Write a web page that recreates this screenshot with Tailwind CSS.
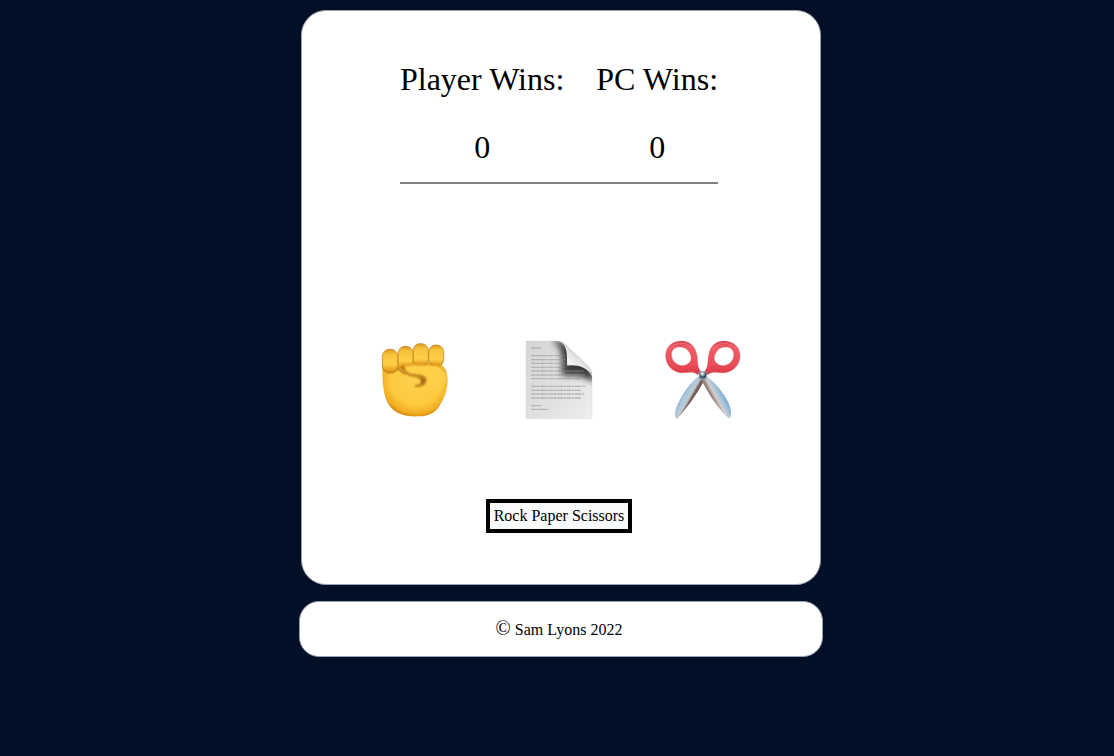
<!DOCTYPE html>
<html lang="en">
<head>
<meta charset="utf-8">
<meta name="viewport" content="width=device-width, initial-scale=1">
<title>Rock Paper Scissors</title>
<script src="https://cdn.jsdelivr.net/npm/@tailwindcss/browser@4"></script>
</head>
<body class="min-h-screen bg-[#020f26] pt-[10px] pl-2 text-black font-['Liberation_Serif','Times_New_Roman',serif]">
<main class="mx-auto flex w-full max-w-[520px] flex-col items-center rounded-[25px] border border-gray-400 bg-white pt-[50px] pr-1 pb-[51px]">
  <section class="grid grid-cols-[auto_auto] gap-x-8 gap-y-8 border-b-2 border-[#808080] pb-[17px] text-center text-[32px] leading-9" aria-label="Score">
    <h2>Player Wins:</h2>
    <h2>PC Wins:</h2>
    <output>0</output>
    <output>0</output>
  </section>
  <div class="mt-[146px] flex gap-12">
    <button type="button" aria-label="Rock" class="h-[100px] w-24">
      <svg viewBox="0 0 288 300" class="size-full" aria-hidden="true">
        <defs>
          <radialGradient id="skin" gradientUnits="userSpaceOnUse" cx="148" cy="145" r="122"><stop offset="0" stop-color="#ffd250"/><stop offset=".65" stop-color="#fdc93f"/><stop offset=".86" stop-color="#f2ae22"/><stop offset="1" stop-color="#c87a0a"/></radialGradient>
          <linearGradient id="finger" x2="0" y2="1"><stop stop-color="#dc9a1c"/><stop offset=".22" stop-color="#f8c33a"/><stop offset=".65" stop-color="#ffcf46"/><stop offset="1" stop-color="#df8f12"/></linearGradient>
          <filter id="soft" x="-20%" y="-20%" width="140%" height="140%"><feGaussianBlur stdDeviation="2.5"/></filter>
        </defs>
        <path d="M46 100C46 82 65 91 98 92L210 98C231 103 243 125 242 153C240 184 231 206 221 222C209 246 187 259 155 259C119 261 91 253 73 234C51 211 45 170 46 100Z" fill="url(#skin)"/>
        <path d="M51 116Q71 139 93 113Q104 127 118 131" fill="none" stroke="#a86300" stroke-width="5" filter="url(#soft)"/>
        <g fill="url(#finger)" stroke="#b8770f" stroke-width="2">
          <rect x="185" y="45" width="45" height="65" rx="21"/>
          <rect x="138" y="41" width="46" height="68" rx="21"/>
          <rect x="93" y="49" width="45" height="68" rx="21"/>
          <rect x="46" y="58" width="46" height="69" rx="21"/>
        </g>
        <path d="M133 103C158 101 182 105 205 105C227 105 239 128 234 153C228 175 202 186 178 176C170 171 177 160 175 151C169 138 132 145 114 129C104 116 115 103 133 103Z" fill="#ffcf47" filter="url(#soft)"/>
        <path d="M117 104Q160 102 205 104Q227 108 236 127" fill="none" stroke="#bb760d" stroke-width="3" filter="url(#soft)"/>
        <path d="M108 107C106 119 117 131 131 135C151 138 173 136 175 150C174 163 164 168 146 168" fill="none" stroke="#ad690a" stroke-width="6" stroke-linecap="round" filter="url(#soft)"/>
        <path d="M146 140C162 142 174 146 173 153Q170 162 157 166C167 156 164 147 146 140Z" fill="#713b00" opacity=".75" filter="url(#soft)"/>
      </svg>
    </button>
    <button type="button" aria-label="Paper" class="h-[100px] w-24">
      <svg viewBox="0 0 288 300" class="size-full" aria-hidden="true">
        <defs>
          <linearGradient id="sheet" x2="1" y2="1"><stop stop-color="#d5d5d5"/><stop offset=".55" stop-color="#e0e0e0"/><stop offset="1" stop-color="#eeeeee"/></linearGradient>
          <linearGradient id="curl" gradientUnits="userSpaceOnUse" x1="170" y1="112" x2="205" y2="76"><stop stop-color="#b8b8b8"/><stop offset=".25" stop-color="#f7f7f7"/><stop offset=".65" stop-color="#e6e6e6"/><stop offset="1" stop-color="#d5d5d5"/></linearGradient>
          <clipPath id="page"><path d="M45 33H136C151 33 160 40 169 49L232 110C239 117 243 125 243 139V266H45Z"/></clipPath>
          <filter id="shade" x="-30%" y="-30%" width="160%" height="160%"><feGaussianBlur stdDeviation="9"/></filter>
        </defs>
        <path d="M45 33H136C151 33 160 40 169 49L232 110C239 117 243 125 243 139V266H45Z" fill="url(#sheet)" stroke="#d0d0d0" stroke-width="1"/>
        <g clip-path="url(#page)">
          <path d="M120 23L178 44L246 116L251 160Q222 128 156 137Q168 64 120 23" fill="#222" opacity=".85" filter="url(#shade)"/>
          <path d="M166 60L160 123Q190 116 243 138" fill="none" stroke="#333" stroke-width="16" opacity=".6" filter="url(#shade)"/>
        </g>
        <path d="M61 54H92M61 77H163M61 89H163M61 100H163M61 112H164M61 123H218M61 135H222M61 146H209M61 169H223M61 181H209M61 192H218M61 204H211M61 227H92M61 238H112" fill="none" stroke="#8c8c8c" stroke-width="4" stroke-dasharray="13 2 8 2 18 2 6 2" opacity=".55"/>
        <path d="M136 33C159 33 168 55 168 83V107C190 102 230 108 243 139C243 124 238 115 229 106L167 46C159 38 151 33 136 33Z" fill="url(#curl)"/>
      </svg>
    </button>
    <button type="button" aria-label="Scissors" class="h-[100px] w-24">
      <svg viewBox="0 0 288 300" class="size-full" aria-hidden="true">
        <defs>
          <linearGradient id="bladeLeft" gradientUnits="userSpaceOnUse" x1="84" y1="185" x2="112" y2="201"><stop stop-color="#8fb6d3"/><stop offset=".55" stop-color="#b1cde0"/><stop offset=".78" stop-color="#c5c3c5"/><stop offset="1" stop-color="#6e5d5b"/></linearGradient>
          <linearGradient id="bladeRight" gradientUnits="userSpaceOnUse" x1="174" y1="206" x2="204" y2="190"><stop stop-color="#8e7f7d"/><stop offset=".3" stop-color="#d8cdca"/><stop offset=".55" stop-color="#adc9de"/><stop offset="1" stop-color="#82acce"/></linearGradient>
          <linearGradient id="red" x2="0" y2="1"><stop stop-color="#d04450"/><stop offset=".2" stop-color="#f45d68"/><stop offset=".65" stop-color="#ec4e5a"/><stop offset="1" stop-color="#d73b47"/></linearGradient>
          <radialGradient id="metal" cx=".4" cy=".3"><stop stop-color="#fff"/><stop offset=".55" stop-color="#9ca9b2"/><stop offset="1" stop-color="#434e57"/></radialGradient>
        </defs>
        <path d="M136 135L150 147C134 177 108 221 69 263Q65 268 62 263C56 252 63 232 71 216C85 188 108 154 136 135Z" fill="url(#bladeLeft)"/>
        <path d="M149 135L137 147C154 178 180 225 217 262Q222 268 226 262C232 253 227 232 219 215C204 186 177 153 149 135Z" fill="url(#bladeRight)"/>
        <path fill="url(#red)" stroke="#d44149" stroke-width="1" fill-rule="evenodd" d="M72 34C98 29 119 45 125 72C130 96 125 110 137 124L128 134C113 121 94 130 76 128C51 124 33 106 32 78C32 54 47 37 72 34ZM72 51C53 52 46 68 51 84C56 99 74 111 90 106C108 100 113 85 104 69C98 56 87 50 72 51Z"/>
        <path fill="url(#red)" stroke="#d44149" stroke-width="1" fill-rule="evenodd" d="M214 34C188 29 167 45 162 72C157 96 161 110 149 124L158 134C173 121 192 130 210 128C235 124 254 106 255 78C255 54 239 37 214 34ZM214 51C233 52 240 68 235 84C230 99 212 111 196 106C178 100 173 85 182 69C188 56 199 50 214 51Z"/>
        <path d="M43 57Q53 42 73 40Q98 36 112 57M245 57Q232 40 213 40Q187 37 175 57" fill="none" stroke="#ff8a90" stroke-width="3" stroke-linecap="round" opacity=".5"/>
        <path d="M130 127Q143 121 157 127L154 146Q143 152 133 146Z" fill="#7894a8"/>
        <circle cx="144" cy="135" r="10" fill="url(#metal)"/>
      </svg>
    </button>
  </div>
  <button type="button" class="mt-[69px] border-4 border-black bg-gray-50 px-1 py-px text-base">Rock Paper Scissors</button>
</main>
<footer class="mx-auto mt-4 flex h-14 w-full max-w-[524px] items-center justify-center rounded-[20px] border border-gray-400 bg-white pr-1 text-base">
  <p><span class="text-xl leading-6">©</span> Sam Lyons 2022</p>
</footer>
</body>
</html>
